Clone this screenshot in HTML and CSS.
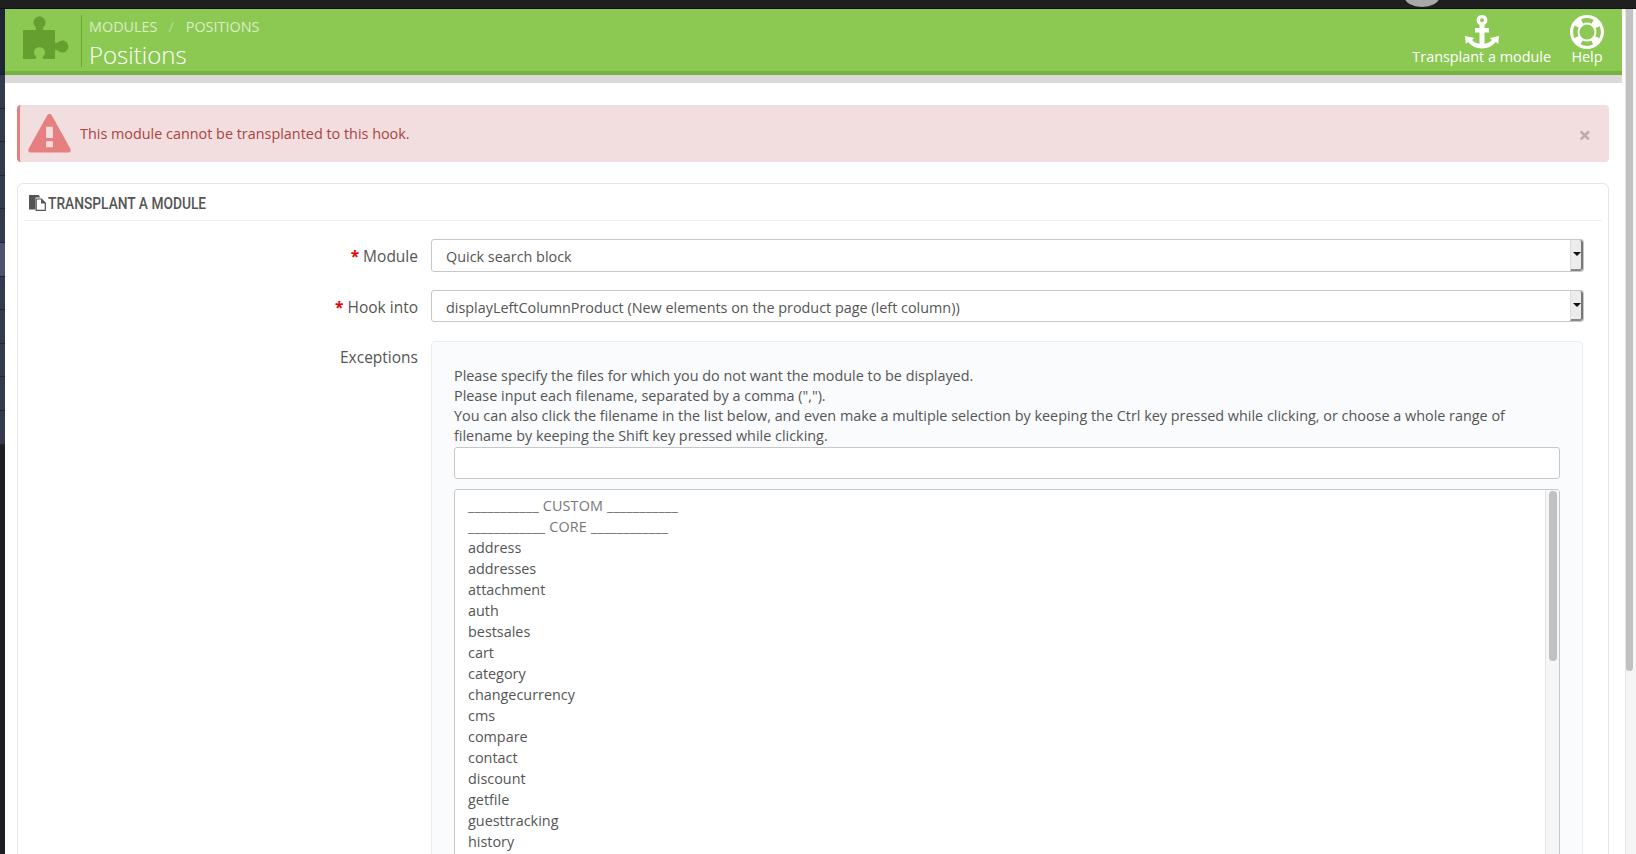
FILE: index.html
```html
<!DOCTYPE html>
<html lang="en">
<head>
<meta charset="utf-8">
<title>Positions</title>
<link rel="stylesheet" href="styles.css">
</head>
<body>
<div class="topbar"><span class="avatar"></span></div>
<div class="page">
  <nav class="sidebar">
    <div class="nav-head"></div>
    <div class="nav-item"></div><div class="nav-item"></div><div class="nav-item"></div><div class="nav-item"></div>
    <div class="nav-item"></div><div class="nav-item active"></div><div class="nav-item"></div><div class="nav-item"></div>
    <div class="nav-item"></div><div class="nav-item"></div><div class="nav-item"></div>
  </nav>
  <main class="main">
    <header class="head">
      <div class="head-logo">
        <svg class="puzzle" viewBox="0 1 48 46" width="48" height="46"><path fill="#659f2f" d="M1 16h11.500c2 0 2.200-1.500 1-3-1.200-1.400-2-2.600-2-4.500 0-3.300 2.800-6 6-6s6 2.700 6 6c0 1.900-.8 3.100-2 4.500-1.200 1.500-1 3 1 3H33v11.500c0 2 1.400 2.200 2.800 1 1.500-1.200 2.700-2 4.600-2 3.300 0 6 2.700 6 6s-2.700 6-6 6c-1.900 0-3.100-.8-4.600-2-1.400-1.200-2.800-1-2.800 1V45H22.500c-2 0-2.200-1.500-1-3 1-1.200 1.500-2.300 1.500-3.800 0-2.800-2.400-5-5.500-5s-5.500 2.200-5.500 5c0 1.500.5 2.600 1.500 3.800 1.200 1.500 1 3-1 3H1z"/></svg>
      </div>
      <div class="head-title">
        <div class="crumbs"><span>Modules</span><span class="crumb-sep">/</span><span>Positions</span></div>
        <h1 class="page-title">Positions</h1>
      </div>
      <div class="head-actions">
        <a class="action action-anchor">
          <svg viewBox="0 0 34 34" width="34" height="34"><path fill="#fff" fill-rule="evenodd" d="M17 0a5.300 5.300 0 0 1 2.500 10v3H24v4.500h-4.500v11.200c3.300-.4 6-1.700 7.500-3.700l-2.300-2.100L34 21l-.8 8-2.400-2.200C28 31 22.500 33.500 17 33.500S6 31 3.200 26.800L.8 29 0 21l9.300 1.900L7 25c1.500 2 4.200 3.300 7.500 3.700V17.500H10V13h4.500v-3A5.300 5.300 0 0 1 17 0zm0 3.300a2 2 0 1 0 0 4 2 2 0 0 0 0-4z"/></svg>
          <span>Transplant a module</span>
        </a>
        <a class="action action-help">
          <svg viewBox="0 0 34 34" width="34" height="34"><circle cx="17" cy="17" r="17" fill="#fff"/><circle cx="17" cy="17" r="11.700" fill="none" stroke="#8cc953" stroke-width="4.500" stroke-dasharray="11 7.380" stroke-dashoffset="5.500"/><circle cx="17" cy="17" r="7.500" fill="#8cc953"/></svg>
          <span>Help</span>
        </a>
      </div>
    </header>
    <div class="head-shadow"></div>
    <div class="content">
      <div class="alert">
        <svg class="alert-icon" viewBox="0 0 44 40" width="43" height="39"><path fill="#e57f80" fill-rule="evenodd" d="M22 0c1.200 0 2 .6 2.600 1.700l18.800 34c1 1.900-.1 3.800-2.300 3.800H2.900C.7 39.500-.4 37.600.6 35.700l18.800-34C20 .6 20.800 0 22 0zm-3.500 13v11.500h7V13zm0 15v6h7v-6z"/></svg>
        <span class="alert-text">This module cannot be transplanted to this hook.</span>
        <span class="alert-close">×</span>
      </div>
      <section class="panel">
        <div class="panel-heading">
          <svg viewBox="0 0 17 16" width="17" height="16"><path fill="#555" d="M0 0h9.500l2 2.500H6.500v12H0z"/><path fill="#fff" stroke="#555" stroke-width="1.200" d="M7.200 4h5.300l3.800 4v7.400H7.200z"/><path fill="#555" d="M12 4l4.500 4.500H12z"/></svg>
          <span class="panel-title">Transplant a module</span>
        </div>
        <div class="row row-select">
          <label class="row-label"><em>*</em> Module</label>
          <div class="select"><span class="select-value">Quick search block</span><span class="select-arrow"></span></div>
        </div>
        <div class="row row-select2">
          <label class="row-label"><em>*</em> Hook into</label>
          <div class="select select-short"><span class="select-value">displayLeftColumnProduct (New elements on the product page (left column))</span><span class="select-arrow"></span></div>
        </div>
        <div class="row">
          <label class="row-label label-exc">Exceptions</label>
          <div class="well">
            <p class="well-text">Please specify the files for which you do not want the module to be displayed.<br>Please input each filename, separated by a comma (",").<br>You can also click the filename in the list below, and even make a multiple selection by keeping the Ctrl key pressed while clicking, or choose a whole range of filename by keeping the Shift key pressed while clicking.</p>
            <div class="input"></div>
            <div class="listbox">
              <ul class="options">
                <li class="opt-muted">___________ CUSTOM ___________</li>
                <li class="opt-muted">____________ CORE ____________</li>
                <li>address</li><li>addresses</li><li>attachment</li><li>auth</li><li>bestsales</li><li>cart</li><li>category</li><li>changecurrency</li><li>cms</li><li>compare</li><li>contact</li><li>discount</li><li>getfile</li><li>guesttracking</li><li>history</li>
              </ul>
              <div class="list-scroll"><div class="list-thumb"></div></div>
            </div>
          </div>
        </div>
      </section>
    </div>
  </main>
  <div class="page-scroll"><div class="page-thumb"></div></div>
</div>
</body>
</html>
```

FILE: styles.css
```css
* { box-sizing: border-box; }
html, body { margin: 0; height: 854px; overflow: hidden; }
body { font-family: "Open Sans", sans-serif; font-size: 14.4px; color: #555; background: #fff; }

.topbar { height: 9px; background: #1f1f1f; position: relative; overflow: hidden; border-bottom: 1px solid #111; }
.avatar { position: absolute; left: 1405px; top: -11px; width: 34px; height: 18px; border-radius: 50%; background: #a9a9a9; }

.page { display: flex; height: 845px; }

.sidebar { width: 5px; flex: none; background: #1d1d22; }
.nav-head { height: 66px; background: #1e2435; border-bottom: 1px solid #1a1f2d; }
.nav-item { height: 33.600px; background: #343a4e; border-bottom: 1px solid #20242f; }
.nav-item.active { background: #4a5470; }

.main { width: 1617px; flex: none; overflow: hidden; }

.head { display: flex; height: 66px; background: #8cc953; border-bottom: 4px solid #77b23e; padding-left: 16px; }
.head-logo { width: 61px; height: 52px; margin-top: 6px; padding-left: 1px; border-right: 1px solid #6ba534; flex: none; }
.puzzle { display: block; }
.head-title { padding-left: 7px; color: #fff; flex: 1; }
.crumbs { font-size: 14.4px; line-height: 20px; margin-top: 8px; text-transform: uppercase; color: #d8eec4; }
.crumb-sep { margin: 0 12px 0 11px; color: #b9dd99; }
.page-title { margin: 2px 0 0; font-size: 24px; line-height: 32px; font-weight: 300; color: #fff; }
.head-actions { display: flex; color: #fff; padding-right: 18px; gap: 19px; }
.action { display: flex; flex-direction: column; align-items: center; font-size: 14.4px; line-height: 18px; padding-top: 6px; }
.action svg { display: block; }
.action span { margin-top: -1px; }

.head-shadow { height: 8px; background: #d9d9d9; }

.content { padding: 22px 13px 0 12px; }

.alert { display: flex; align-items: center; height: 57px; background: #f2dede; border-left: 3px solid #e58080; border-radius: 4px; padding-left: 8px; margin-bottom: 21px; }
.alert-icon { flex: none; margin-right: 9px; }
.alert-text { flex: 1; color: #a94442; font-size: 14.4px; }
.alert-close { font-size: 22px; line-height: 22px; font-weight: 700; color: #bfa9ab; margin-right: 18px; }

.panel { border: 1px solid #e6e6e6; border-radius: 6px; padding: 0 6px; height: 800px; }
.panel-heading { display: flex; align-items: center; gap: 2px; height: 37px; padding: 2px 0 0 5px; border-bottom: 1px solid #eee; margin-bottom: 18px; color: #555; }
.panel-title { display: inline-block; font-family: Roboto, sans-serif; font-size: 17px; font-weight: 500; text-transform: uppercase; white-space: nowrap; transform: scaleX(0.81); transform-origin: left center; }

.row { display: flex; }
.row-select { margin-bottom: 18px; }
.row-select2 { margin-bottom: 19px; }
.row-label { width: 394px; height: 32px; text-align: right; font-size: 15.5px; line-height: 35px; color: #555; flex: none; margin-right: 13px; }
.row-label em { font-style: normal; color: #e00; font-weight: 700; }
.row-label.label-exc { line-height: 33px; }

.select { width: 1153px; height: 33px; display: flex; justify-content: space-between; border: 1px solid #c7c7c7; border-radius: 3px; background: #fff; }
.select-short { height: 32px; }
.select-value { padding-left: 14px; line-height: 33px; color: #555; }
.select-arrow { width: 13px; background: #ececec; border-left: 1px solid #ddd; border-right: 2px solid #777; border-bottom: 2px solid #888; border-radius: 0 3px 3px 0; position: relative; }
.select-arrow::after { content: ""; position: absolute; left: 2px; top: 12px; border: 4px solid transparent; border-top: 4px solid #111; }

.well { width: 1152px; height: 600px; background: #f9fbfd; border: 1px solid #e8edf2; border-radius: 4px; padding: 24px 22px 0 22px; }
.well-text { margin: 0 0 1px; line-height: 20px; color: #555; }
.input { height: 32px; background: #fff; border: 1px solid #c7c7c7; border-radius: 3px; margin-bottom: 10px; }
.listbox { display: flex; justify-content: space-between; height: 400px; background: #fff; border: 1px solid #c7c7c7; border-radius: 3px 3px 0 0; }
.options { list-style: none; margin: 5px 0 0; padding: 0 0 0 13px; }
.options li { height: 21px; line-height: 21px; color: #555; }
.options .opt-muted { color: #777; letter-spacing: 0.14px; }
.list-scroll { width: 14px; background: #f6f6f6; border-left: 1px solid #e6e6e6; padding: 1px 2px 0 3px; }
.list-thumb { height: 170px; background: #c1c1c1; border-radius: 4px; }

.page-scroll { flex: 1; background: #f5f5f5; border-left: 1px solid #e4e4e4; margin-left: 3px; padding: 0 3px 0 0; }
.page-thumb { height: 662px; background: #c1c1c1; border-radius: 0 0 4px 4px; }
```
